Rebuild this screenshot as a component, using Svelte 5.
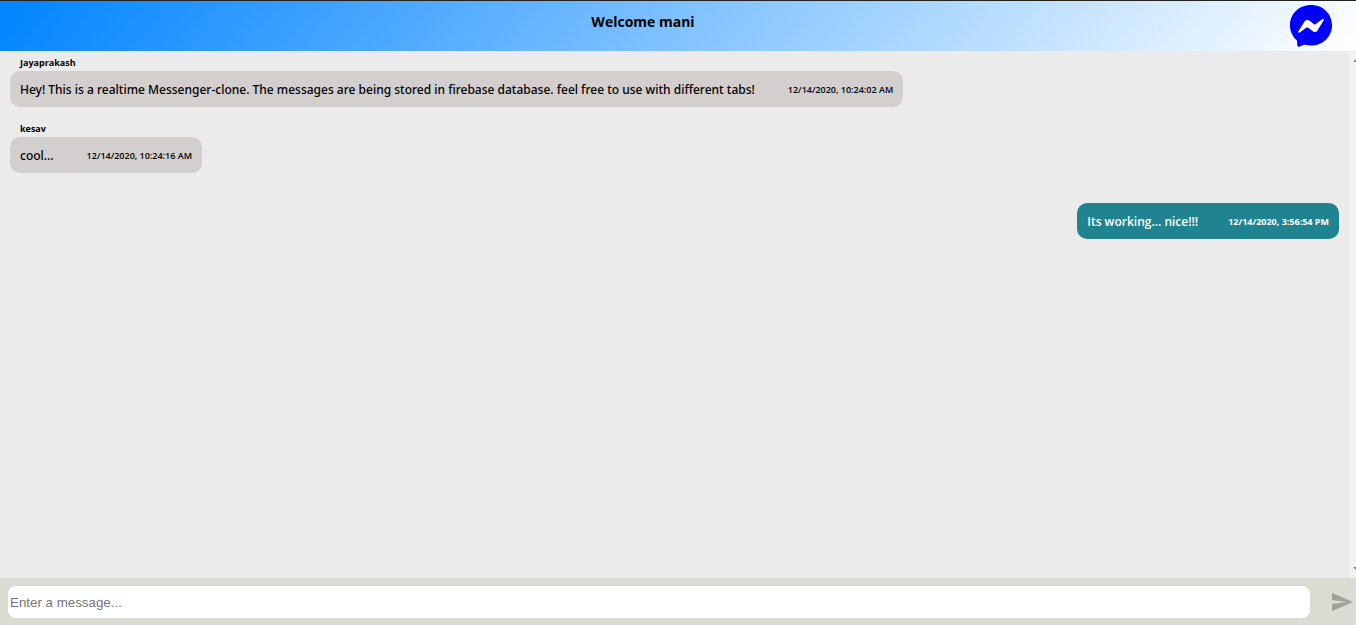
<script>
  const user = 'mani';
  const messages = [
    {
      author: 'Jayaprakash',
      text: 'Hey! This is a realtime Messenger-clone. The messages are being stored in firebase database. feel free to use with different tabs!',
      time: '12/14/2020, 10:24:02 AM'
    },
    { author: 'kesav', text: 'cool...', time: '12/14/2020, 10:24:16 AM' },
    { author: 'mani', text: 'Its working... nice!!!', time: '12/14/2020, 3:56:54 PM' }
  ];
  let draft = $state('');
</script>

<div class="app">
  <header>
    <h1>Welcome {user}</h1>
    <svg class="logo" viewBox="0 0 42 42" aria-hidden="true">
      <path
        fill="#00f"
        d="M21 0C9.2 0 0 8.700 0 20.200c0 6 2.500 11.200 6.500 14.800.4.4.6.8.6 1.300l.2 3.900c.1 1.300 1.300 1.900 2.400 1.400l4.200-1.800c.4-.2.8-.2 1.200-.1 1.900.500 3.900.8 5.900.8 11.800 0 21-8.700 21-20.300S32.800 0 21 0z"
      />
      <path
        fill="#fff"
        d="M8.400 26.300l6.200-9.800c1-1.600 3.100-2 4.600-.9l4.900 3.700c.4.300 1 .3 1.400 0l6.700-5c.9-.7 2 .4 1.400 1.300l-6.200 9.800c-1 1.600-3.100 2-4.600.9l-4.900-3.700c-.4-.3-1-.3-1.400 0l-6.700 5c-.9.700-2-.4-1.400-1.300z"
      />
    </svg>
  </header>

  <div class="body">
    <main>
      {#each messages as m}
        <article class:own={m.author === user}>
          <div class="author">{m.author === user ? '' : m.author}</div>
          <div class="bubble">
            <span class="text">{m.text}</span>
            <time>{m.time}</time>
          </div>
        </article>
      {/each}
    </main>
    <div class="rail" aria-hidden="true">
      <svg viewBox="0 0 3 3"><path d="M0 3L3 0V3z" /></svg>
      <svg viewBox="0 0 3 3"><path d="M0 0H3V3z" /></svg>
    </div>
  </div>

  <form onsubmit={(e) => e.preventDefault()}>
    <input type="text" aria-label="Message" placeholder="Enter a message..." bind:value={draft} />
    <button type="submit" aria-label="Send" disabled={!draft}>
      <svg viewBox="0 0 24 24"><path d="M2.010 21L23 12 2.010 3 2 10l15 2-15 2z" /></svg>
    </button>
  </form>
</div>

<style>
  :global(body) {
    margin: 0;
  }
  .app {
    display: flex;
    flex-direction: column;
    height: 100vh;
    background: #ebebeb;
    color: #000;
    font-family: 'Segoe UI', 'Open Sans', 'Noto Sans', sans-serif;
  }
  header {
    display: flex;
    box-sizing: border-box;
    height: 51px;
    padding: 4px 24px 0 0;
    border-top: 1px solid #222;
    background: linear-gradient(130deg, #0084ff, #fff);
  }
  h1 {
    flex: 1;
    margin: 0;
    padding: 7px 0 0 0;
    text-align: center;
    font-size: 14px;
    line-height: 20px;
    font-weight: 700;
  }
  .logo {
    width: 42px;
    height: 42px;
    margin-left: 4px;
  }
  .body {
    flex: 1;
    display: flex;
    min-height: 0;
  }
  main {
    flex: 1;
    overflow: hidden;
    padding: 0 10px;
  }
  article {
    display: flex;
    flex-direction: column;
    align-items: flex-start;
    margin-bottom: 10px;
  }
  .author {
    height: 16px;
    padding: 4px 10px 0;
    font-size: 9px;
    line-height: 16px;
    font-weight: 700;
  }
  .bubble {
    display: flex;
    align-items: center;
    gap: 33px;
    padding: 9px 10px 7px;
    border-radius: 10px;
    background: #d3cfce;
  }
  .text {
    font-family: 'Segoe UI', 'Noto Sans', sans-serif;
    font-size: 12px;
    line-height: 20px;
    font-weight: 500;
  }
  time {
    font-size: 9px;
    line-height: 20px;
    font-weight: 600;
    white-space: nowrap;
  }
  .own {
    align-items: flex-end;
  }
  .own .bubble {
    gap: 30px;
    background: #1f848f;
    color: #fff;
  }
  .own .text {
    font-family: 'Segoe UI', 'Open Sans', sans-serif;
    font-weight: 600;
  }
  .own time {
    font-weight: 700;
  }
  .rail {
    display: flex;
    flex-direction: column;
    justify-content: space-between;
    align-items: flex-end;
    box-sizing: border-box;
    width: 7px;
    padding: 8px 0;
    background: #f1f1f1;
  }
  .rail svg {
    width: 3px;
    height: 3px;
    fill: #888;
  }
  form {
    display: flex;
    align-items: center;
    gap: 20px;
    padding: 8px 2px 7px 8px;
    background: #dadbd3;
  }
  input {
    flex: 1;
    min-width: 0;
    height: 32px;
    box-sizing: border-box;
    padding: 0 2px;
    border: 0;
    border-radius: 8px;
    background: #fff;
    font-family: 'Liberation Sans', Arial, sans-serif;
  }
  input::placeholder {
    color: #757575;
  }
  button {
    display: flex;
    padding: 0;
    border: 0;
    background: none;
    color: #a0a19b;
  }
  button svg {
    width: 24px;
    height: 24px;
    fill: currentColor;
  }
</style>
